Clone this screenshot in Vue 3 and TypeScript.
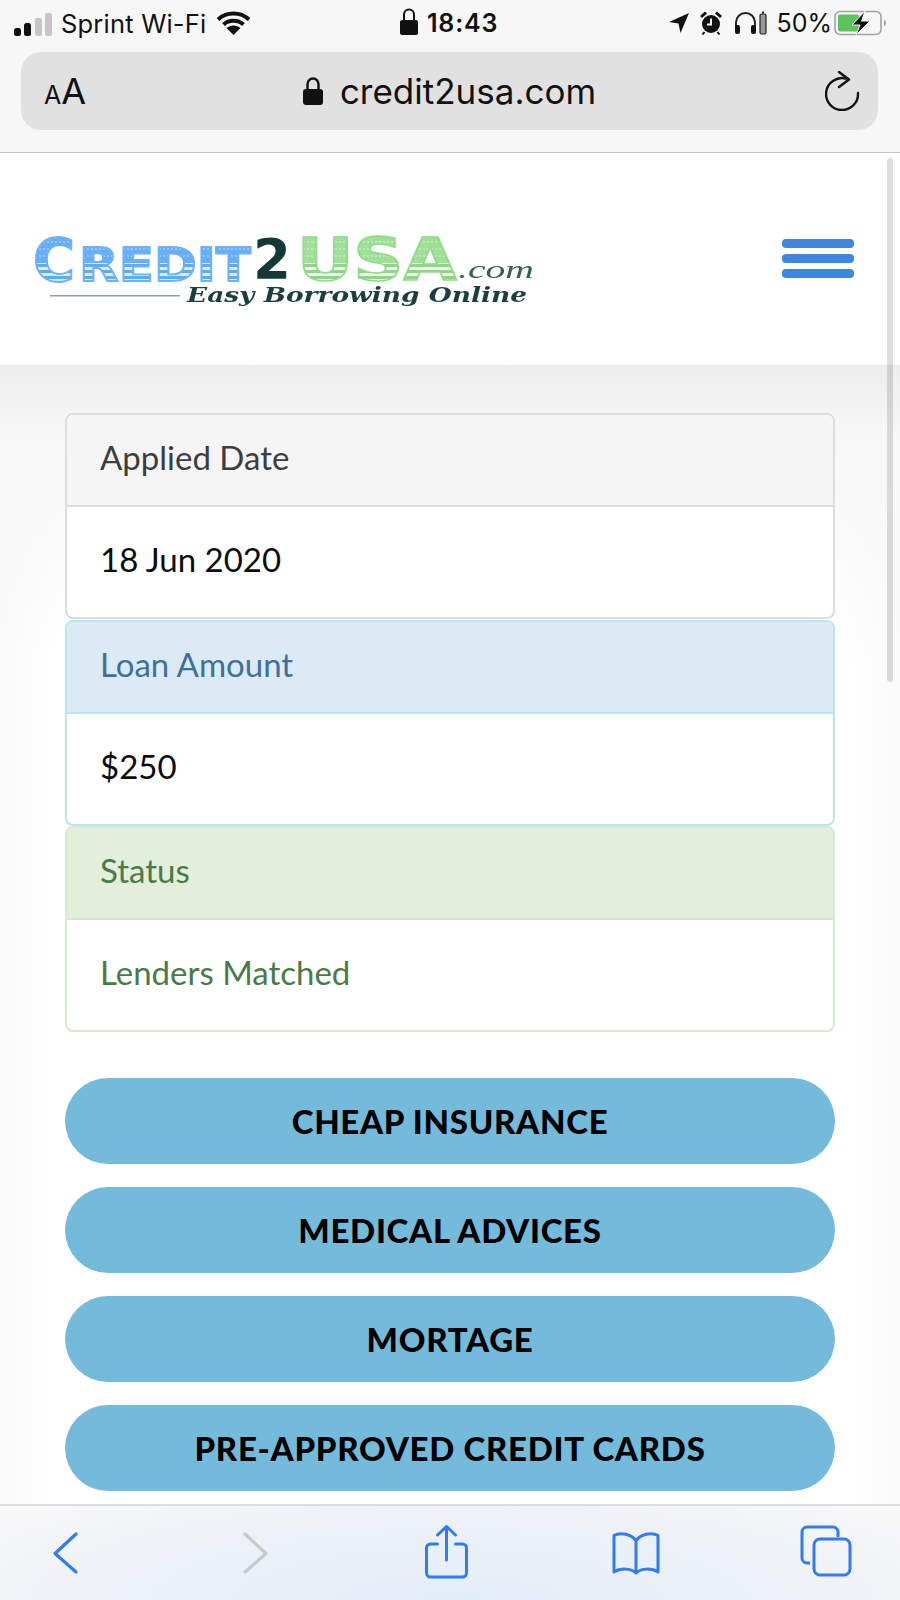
<script setup lang="ts">
interface Panel { head: string; body: string; tone: string }
const panels: Panel[] = [
  { head: 'Applied Date', body: '18 Jun 2020', tone: 'neutral' },
  { head: 'Loan Amount', body: '$250', tone: 'info' },
  { head: 'Status', body: 'Lenders Matched', tone: 'success' },
]
const links: string[] = ['CHEAP INSURANCE', 'MEDICAL ADVICES', 'MORTAGE', 'PRE-APPROVED CREDIT CARDS']
</script>

<template>
  <div class="phone">
    <div class="chrome">
      <div class="status">
        <div class="st-left">
          <svg class="signal" width="38" height="24" viewBox="0 0 38 24">
            <rect x="0" y="15" width="7" height="8" rx="2.5" fill="#111" />
            <rect x="10" y="10" width="7" height="13" rx="2.5" fill="#111" />
            <rect x="21" y="5" width="7" height="18" rx="2" fill="#c6c6c6" />
            <rect x="31" y="0" width="7" height="23" rx="2" fill="#c6c6c6" />
          </svg>
          <span class="carrier">Sprint Wi-Fi</span>
          <svg class="wifi" width="33" height="24" viewBox="0 0 33 24">
            <path d="M1 8.5C9.5 0.5 23.5 0.5 32 8.5" fill="none" stroke="#111" stroke-width="4" />
            <path d="M6.5 13.5C12 8.5 21 8.5 26.500 13.500" fill="none" stroke="#111" stroke-width="4" />
            <path d="M16.500 24L9.500 17C13.500 13.500 19.500 13.500 23.500 17Z" fill="#111" />
          </svg>
        </div>
        <div class="st-center">
          <svg width="18" height="27" viewBox="0 0 18 27">
            <path d="M4 13V6.500a5 5 0 0 1 10 0V13" fill="none" stroke="#111" stroke-width="2" />
            <rect x="0" y="12" width="18" height="15" rx="2" fill="#111" />
          </svg>
          <span class="time">18:43</span>
        </div>
        <div class="st-right">
          <svg width="20" height="20" viewBox="0 0 20 20"><path d="M20 0L11.500 20L9.500 10.500L0 9Z" fill="#111" /></svg>
          <svg class="alarm" width="22" height="24" viewBox="0 0 22 24">
            <circle cx="11" cy="13" r="9" fill="#111" />
            <path d="M11 7.500V13.500H7" fill="none" stroke="#f7f7f7" stroke-width="2" />
            <path d="M1 6L6 1.500M21 6L16 1.500" stroke="#111" stroke-width="3" />
            <path d="M4.500 21L2.500 23.500M17.500 21L19.500 23.500" stroke="#111" stroke-width="2" />
          </svg>
          <svg class="phones" width="33" height="24" viewBox="0 0 33 24">
            <path d="M2 19V11.500a9.500 9.500 0 0 1 19 0V19" fill="none" stroke="#222" stroke-width="2" />
            <rect x="1" y="14" width="5" height="9" rx="2" fill="#111" />
            <rect x="17" y="14" width="5" height="9" rx="2" fill="#111" />
            <rect x="26" y="3" width="6" height="20" rx="1.500" fill="#999" stroke="#222" stroke-width="1.200" />
            <rect x="28" y="0.500" width="2" height="2" fill="#222" />
          </svg>
          <span class="pct">50%</span>
          <svg width="54" height="26" viewBox="0 0 54 26">
            <rect x="1" y="1.500" width="46" height="23" rx="5" fill="none" stroke="#a3a3a3" stroke-width="1.600" />
            <rect x="4" y="4.500" width="21" height="17" rx="2" fill="#5cc35f" />
            <path d="M50 9.500a4 4 0 0 1 0 7Z" fill="#a3a3a3" />
            <path d="M31 1L18 15H26L22 25L36 11H27.500Z" fill="#111" stroke="#f7f7f7" stroke-width="1" />
          </svg>
        </div>
      </div>
      <div class="urlbar">
        <span class="aa"><span class="aa-small">A</span>A</span>
        <div class="address">
          <svg width="20" height="28" viewBox="0 0 20 28">
            <path d="M4.500 13V7a5.500 5.500 0 0 1 11 0V13" fill="none" stroke="#111" stroke-width="2.400" />
            <rect x="0" y="12" width="20" height="16" rx="3" fill="#111" />
          </svg>
          <span class="domain">credit2usa.com</span>
        </div>
        <svg class="reload" width="36" height="40" viewBox="0 0 36 40">
          <path d="M21 7.500A16 16 0 1 0 33 22" fill="none" stroke="#111" stroke-width="2.400" stroke-linecap="round" />
          <path d="M14 1L24 8.500L14 16" fill="none" stroke="#111" stroke-width="2.400" stroke-linecap="round" stroke-linejoin="round" />
        </svg>
      </div>
    </div>

    <header class="site-header">
      <svg class="logo" width="510" height="100" viewBox="0 0 510 100">
        <defs>
          <pattern id="blueFlag" patternUnits="userSpaceOnUse" width="4" height="48" y="4">
            <rect width="4" height="48" fill="#dcedff" />
            <rect width="4" height="26" fill="#66aefb" />
            <circle cx="2" cy="5" r="0.800" fill="#d5e9ff" />
            <circle cx="2" cy="12" r="0.800" fill="#d5e9ff" />
            <circle cx="2" cy="19" r="0.800" fill="#d5e9ff" />
            <rect y="27" width="4" height="3" fill="#5ea9f8" />
            <rect y="33" width="4" height="3" fill="#5ea9f8" />
            <rect y="39" width="4" height="3" fill="#5ea9f8" />
            <rect y="45" width="4" height="3" fill="#5ea9f8" />
          </pattern>
          <pattern id="greenFlag" patternUnits="userSpaceOnUse" width="4" height="48" y="4">
            <rect width="4" height="48" fill="#eefbea" />
            <rect width="4" height="26" fill="#9fdf98" />
            <circle cx="2" cy="5" r="0.800" fill="#e5f8e0" />
            <circle cx="2" cy="12" r="0.800" fill="#e5f8e0" />
            <circle cx="2" cy="19" r="0.800" fill="#e5f8e0" />
            <rect y="27" width="4" height="3" fill="#8bd884" />
            <rect y="33" width="4" height="3" fill="#8bd884" />
            <rect y="39" width="4" height="3" fill="#8bd884" />
            <rect y="45" width="4" height="3" fill="#8bd884" />
          </pattern>
        </defs>
        <g transform="translate(0 12)">
          <text class="lg-big lg-blue" x="3" y="48" textLength="42" lengthAdjust="spacingAndGlyphs">C</text>
          <text class="lg-mid lg-blue" x="49" y="48" textLength="172" lengthAdjust="spacingAndGlyphs">REDIT</text>
          <text class="lg-two" x="223" y="45" textLength="38" lengthAdjust="spacingAndGlyphs">2</text>
          <text class="lg-big lg-green" x="267" y="47" textLength="160" lengthAdjust="spacingAndGlyphs">USA</text>
          <text class="lg-com" x="428" y="45" textLength="76" lengthAdjust="spacingAndGlyphs">.com</text>
          <rect x="20" y="62" width="130" height="1.500" fill="#8aa3a0" />
          <text class="lg-tag" x="157" y="69" textLength="340" lengthAdjust="spacingAndGlyphs">Easy Borrowing Online</text>
        </g>
      </svg>
      <button class="burger" type="button" aria-label="Menu">
        <span></span><span></span><span></span>
      </button>
    </header>

    <main class="content">
      <section v-for="p in panels" :key="p.head" class="panel" :class="p.tone">
        <div class="panel-head">{{ p.head }}</div>
        <div class="panel-body">{{ p.body }}</div>
      </section>
      <nav class="links">
        <a v-for="l in links" :key="l" class="pill">{{ l }}</a>
      </nav>
    </main>

    <div class="scrollbar"></div>

    <footer class="toolbar">
      <svg width="60" height="48" viewBox="0 0 60 48">
        <path d="M40 5L19 24.500L40 43" fill="none" stroke="#317bf4" stroke-width="3.200" stroke-linecap="round" stroke-linejoin="round" />
      </svg>
      <svg width="60" height="48" viewBox="2 0 60 48">
        <path d="M20 5L41 24.500L20 43" fill="none" stroke="#c9c9c9" stroke-width="3.200" stroke-linecap="round" stroke-linejoin="round" />
      </svg>
      <svg width="60" height="56" viewBox="1.500 0 60 56">
        <path d="M21 19H14a4 4 0 0 0-4 4V48a4 4 0 0 0 4 4H46a4 4 0 0 0 4-4V23a4 4 0 0 0-4-4H39" fill="none" stroke="#317bf4" stroke-width="3" stroke-linecap="round" />
        <path d="M30 35V2M21 10L30 1.500L39 10" fill="none" stroke="#317bf4" stroke-width="3" stroke-linecap="round" stroke-linejoin="round" />
      </svg>
      <svg width="60" height="48" viewBox="3 0 60 48">
        <path d="M30 12C26 5 14 3 8 6.500V43C14 39 25 39 30 44C35 39 46 39 52 43V6.500C46 3 34 5 30 12V44" fill="none" stroke="#317bf4" stroke-width="3" stroke-linecap="round" stroke-linejoin="round" />
      </svg>
      <svg width="60" height="56" viewBox="1 0 60 56">
        <path d="M11 38H8a5 5 0 0 1-5-5V7a5 5 0 0 1 5-5H34a5 5 0 0 1 5 5V12" fill="none" stroke="#317bf4" stroke-width="3" />
        <rect x="15" y="14" width="36" height="36" rx="6" fill="none" stroke="#317bf4" stroke-width="3" />
      </svg>
    </footer>
  </div>
</template>

<style scoped>
.phone {
  position: relative;
  width: 900px;
  height: 1600px;
  overflow: hidden;
  display: flex;
  flex-direction: column;
  background: #fff;
  font-family: Lato, "Open Sans", sans-serif;
}
.chrome {
  height: 153px;
  flex: none;
  box-sizing: border-box;
  background: #f7f7f7;
  border-bottom: 1.5px solid #c4c4c4;
  font-family: Inter, Roboto, sans-serif;
  color: #111;
}
.status {
  height: 52px;
  display: grid;
  grid-template-columns: 386px auto 1fr;
  align-items: center;
  padding: 0 12px 0 14px;
  box-sizing: border-box;
}
.st-left, .st-center, .st-right { display: flex; align-items: center; }
.st-left { gap: 9px; }
.signal { margin-top: -2px; }
.carrier { font-size: 25.500px; letter-spacing: 0.2px; margin-top: -5px; white-space: nowrap; }
.wifi { margin: -6px 0 0 2px; }
.st-center { gap: 9px; margin-top: -10px; }
.time { font-size: 25px; font-weight: 600; letter-spacing: 0.8px; margin-top: 3px; }
.st-right { justify-content: flex-end; margin-top: -6px; }
.alarm { margin-left: 11px; }
.phones { margin-left: 12px; }
.pct { font-size: 25px; margin: 0 2px 0 9px; }
.urlbar {
  height: 78px;
  margin: 0 22px 0 21px;
  padding: 0 17px 0 23px;
  box-sizing: border-box;
  display: flex;
  align-items: center;
  justify-content: space-between;
  background: #e1e1e1;
  border-radius: 20px;
}
.aa { font-size: 36px; width: 110px; line-height: 1; }
.aa-small { font-size: 25px; }
.address { display: flex; align-items: center; gap: 17px; }
.domain { font-size: 35px; }
.reload { margin-left: 80px; }
.site-header {
  height: 212px;
  flex: none;
  box-sizing: border-box;
  padding: 0 46px 0 30px;
  display: flex;
  align-items: flex-start;
  justify-content: space-between;
  background: #fff;
}
.logo { margin-top: 68px; filter: blur(0.5px); }
.lg-big, .lg-mid, .lg-two { font-family: "DejaVu Sans", sans-serif; font-weight: 700; }
.lg-big { font-size: 58px; }
.lg-mid { font-size: 46px; }
.lg-two { font-size: 55px; fill: #123838; }
.lg-blue { fill: url(#blueFlag); stroke: #6cb1fa; stroke-width: 1.800px; }
.lg-green { fill: url(#greenFlag); stroke: #8fdc88; stroke-width: 1.500px; }
.lg-com { font-family: "Liberation Serif", serif; font-style: italic; font-size: 26px; fill: #35605c; }
.lg-tag { font-family: "DejaVu Serif", serif; font-style: italic; font-weight: 700; font-size: 20px; fill: #1b3f3e; }
.burger {
  width: 72px;
  padding: 0;
  border: 0;
  background: none;
  display: flex;
  flex-direction: column;
  gap: 6px;
  margin-top: 86px;
}
.burger span { height: 9px; border-radius: 4px; background: #3d87de; }
.content {
  flex: 1;
  min-height: 0;
  padding: 48px 65px 0 65px;
  display: flex;
  flex-direction: column;
  gap: 0.500px;
  background:
    linear-gradient(#ededed 0, #f7f7f7 70px, rgba(255,255,255,0) 300px),
    linear-gradient(90deg, #fafafa 0, #fff 60px, #fff 840px, #fafafa 100%);
}
.panel {
  height: 206px;
  box-sizing: border-box;
  border: 2px solid #ddd;
  border-radius: 8px;
  background: #fff;
  overflow: hidden;
  flex: none;
  font-size: 33px;
}
.panel-head {
  height: 84px;
  box-sizing: content-box;
  display: flex;
  align-items: center;
  padding: 0 0 6px 33px;
  border-bottom: 2px solid #ddd;
  background: #f5f5f5;
  color: #3d3d3d;
}
.panel-body {
  height: 104px;
  display: flex;
  align-items: center;
  padding: 0 0 6px 33px;
  color: #0c0c0c;
}
.info { border-color: #bce4f0; }
.info .panel-head { background: #dceaf5; color: #3f7196; border-color: #bce4f0; }
.success { border-color: #d8e9cf; }
.success .panel-head { background: #e2efdb; color: #4a7a48; border-color: #d3e7c9; }
.success .panel-body { color: #4a7a48; }
.links {
  margin-top: 45px;
  display: flex;
  flex-direction: column;
  gap: 22.500px;
}
.pill {
  height: 86.500px;
  display: flex;
  align-items: center;
  justify-content: center;
  border-radius: 44px;
  background: #74bbdb;
  color: #000;
  font-weight: 900;
  font-size: 33px;
  letter-spacing: 0.7px;
}
.scrollbar {
  position: absolute;
  left: 887px;
  top: 158px;
  width: 6px;
  height: 524px;
  border-radius: 3px;
  background: rgba(0, 0, 0, 0.13);
}
.toolbar {
  height: 96px;
  flex: none;
  box-sizing: border-box;
  padding: 0 40px 0 36px;
  display: flex;
  align-items: center;
  justify-content: space-between;
  border-top: 2px solid #dcdde0;
  background: radial-gradient(ellipse 560px 130px at 50% 100%, #e3edf9 0, #eff2f7 70%, #f7f7f8 100%);
}
</style>
